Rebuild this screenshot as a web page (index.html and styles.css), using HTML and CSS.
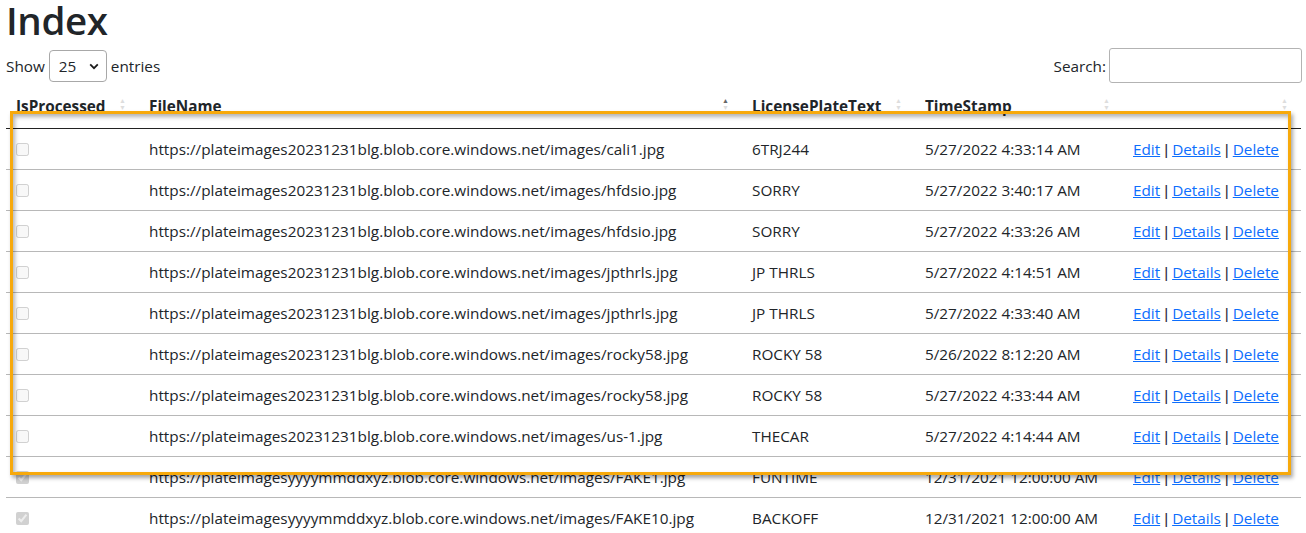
FILE: index.html
```html
<!DOCTYPE html>
<html lang="en">
<head>
<meta charset="utf-8">
<title>Index</title>
<link rel="stylesheet" href="styles.css">
</head>
<body>
<main class="page">
  <h1 class="title">Index</h1>
  <div class="toolbar">
    <label class="length">Show
      <span class="select-wrap">
        <select class="select"><option>25</option></select>
        <svg class="chev" width="10" height="7" viewBox="0 0 10 7"><path d="M1.2 1.4 L5 5.2 L8.8 1.4" fill="none" stroke="#1a1a1a" stroke-width="1.8"/></svg>
      </span>
      entries</label>
    <label class="search">Search:<input class="search-input" type="search"></label>
  </div>
  <div class="table-wrap">
    <table class="grid">
      <colgroup>
        <col class="c1"><col class="c2"><col class="c3"><col class="c4"><col class="c5">
      </colgroup>
      <thead>
        <tr>
          <th class="sortable">IsProcessed</th>
          <th class="sortable asc">FileName</th>
          <th class="sortable">LicensePlateText</th>
          <th class="sortable">TimeStamp</th>
          <th class="sortable"></th>
        </tr>
      </thead>
      <tbody>
        <tr><td><input type="checkbox" disabled></td><td>https://plateimages20231231blg.blob.core.windows.net/images/cali1.jpg</td><td>6TRJ244</td><td>5/27/2022 4:33:14 AM</td><td class="acts"><a href="#">Edit</a> <span class="sep">|</span> <a href="#">Details</a> <span class="sep">|</span> <a href="#">Delete</a></td></tr>
        <tr><td><input type="checkbox" disabled></td><td>https://plateimages20231231blg.blob.core.windows.net/images/hfdsio.jpg</td><td>SORRY</td><td>5/27/2022 3:40:17 AM</td><td class="acts"><a href="#">Edit</a> <span class="sep">|</span> <a href="#">Details</a> <span class="sep">|</span> <a href="#">Delete</a></td></tr>
        <tr><td><input type="checkbox" disabled></td><td>https://plateimages20231231blg.blob.core.windows.net/images/hfdsio.jpg</td><td>SORRY</td><td>5/27/2022 4:33:26 AM</td><td class="acts"><a href="#">Edit</a> <span class="sep">|</span> <a href="#">Details</a> <span class="sep">|</span> <a href="#">Delete</a></td></tr>
        <tr><td><input type="checkbox" disabled></td><td>https://plateimages20231231blg.blob.core.windows.net/images/jpthrls.jpg</td><td>JP THRLS</td><td>5/27/2022 4:14:51 AM</td><td class="acts"><a href="#">Edit</a> <span class="sep">|</span> <a href="#">Details</a> <span class="sep">|</span> <a href="#">Delete</a></td></tr>
        <tr><td><input type="checkbox" disabled></td><td>https://plateimages20231231blg.blob.core.windows.net/images/jpthrls.jpg</td><td>JP THRLS</td><td>5/27/2022 4:33:40 AM</td><td class="acts"><a href="#">Edit</a> <span class="sep">|</span> <a href="#">Details</a> <span class="sep">|</span> <a href="#">Delete</a></td></tr>
        <tr><td><input type="checkbox" disabled></td><td>https://plateimages20231231blg.blob.core.windows.net/images/rocky58.jpg</td><td>ROCKY 58</td><td>5/26/2022 8:12:20 AM</td><td class="acts"><a href="#">Edit</a> <span class="sep">|</span> <a href="#">Details</a> <span class="sep">|</span> <a href="#">Delete</a></td></tr>
        <tr><td><input type="checkbox" disabled></td><td>https://plateimages20231231blg.blob.core.windows.net/images/rocky58.jpg</td><td>ROCKY 58</td><td>5/27/2022 4:33:44 AM</td><td class="acts"><a href="#">Edit</a> <span class="sep">|</span> <a href="#">Details</a> <span class="sep">|</span> <a href="#">Delete</a></td></tr>
        <tr><td><input type="checkbox" disabled></td><td>https://plateimages20231231blg.blob.core.windows.net/images/us-1.jpg</td><td>THECAR</td><td>5/27/2022 4:14:44 AM</td><td class="acts"><a href="#">Edit</a> <span class="sep">|</span> <a href="#">Details</a> <span class="sep">|</span> <a href="#">Delete</a></td></tr>
        <tr><td><input type="checkbox" disabled checked></td><td>https://plateimagesyyyymmddxyz.blob.core.windows.net/images/FAKE1.jpg</td><td>FUNTIME</td><td>12/31/2021 12:00:00 AM</td><td class="acts"><a href="#">Edit</a> <span class="sep">|</span> <a href="#">Details</a> <span class="sep">|</span> <a href="#">Delete</a></td></tr>
        <tr><td><input type="checkbox" disabled checked></td><td>https://plateimagesyyyymmddxyz.blob.core.windows.net/images/FAKE10.jpg</td><td>BACKOFF</td><td>12/31/2021 12:00:00 AM</td><td class="acts"><a href="#">Edit</a> <span class="sep">|</span> <a href="#">Details</a> <span class="sep">|</span> <a href="#">Delete</a></td></tr>
      </tbody>
    </table>
    <div class="highlight"></div>
  </div>
</main>
</body>
</html>
```
FILE: styles.css
```css
* { box-sizing: border-box; }
html, body { margin: 0; background: #fff; }
body {
  font-family: "Open Sans", "Noto Sans", sans-serif;
  font-size: 15.3px;
  line-height: 24px;
  color: #212529;
  overflow: hidden;
}
.page {
  padding: 0 4px 0 6px;
  position: relative;
}
.title {
  margin: 0;
  font-size: 38.5px;
  font-weight: 600;
  line-height: 36px;
  height: 47px;
  padding-top: 2px;
  letter-spacing: -0.4px;
}
.toolbar {
  display: flex;
  justify-content: space-between;
  align-items: center;
  height: 37px;
}
.length {
  display: flex;
  align-items: center;
  gap: 4px;
}
.select-wrap {
  position: relative;
  display: inline-block;
}
.select {
  appearance: none;
  -webkit-appearance: none;
  width: 58px;
  height: 32px;
  padding: 0 0 0 9px;
  font: inherit;
  color: #212529;
  background: #fff;
  border: 1px solid #a8a8a8;
  border-radius: 4px;
}
.chev {
  position: absolute;
  right: 8px;
  top: 13px;
  pointer-events: none;
}
.search {
  display: flex;
  align-items: center;
  gap: 3px;
}
.search-input {
  width: 193px;
  height: 35px;
  border: 1px solid #b3b3b3;
  border-radius: 3px;
  font: inherit;
}
.table-wrap {
  position: relative;
}
.grid {
  width: 1295px;
  table-layout: fixed;
  border-collapse: collapse;
}
.c1 { width: 133px; }
.c2 { width: 603px; }
.c3 { width: 173px; }
.c4 { width: 208px; }
.c5 { width: 178px; }
.grid th {
  position: relative;
  text-align: left;
  font-weight: 700;
  padding: 10px 18px 10px 10px;
  border-bottom: 1px solid #222;
  white-space: nowrap;
  overflow: hidden;
}
.sortable::before,
.sortable::after {
  position: absolute;
  right: 13px;
  font-size: 7px;
  line-height: 7px;
  color: #000;
  opacity: 0.13;
}
.sortable::before { content: "\25B2"; top: 13px; }
.sortable::after { content: "\25BC"; top: 20px; }
.asc::before { opacity: 0.6; }
.grid td {
  height: 41px;
  padding: 8px 10px;
  border-top: 1px solid #b8b8b8;
  white-space: nowrap;
  overflow: hidden;
  vertical-align: middle;
}
.grid tbody tr:first-child td { border-top: 0; height: 40px; }
.grid input[type="checkbox"] {
  margin: 0;
  width: 13px;
  height: 13px;
  vertical-align: -1px;
}
.acts a {
  color: #0d6efd;
  text-decoration: underline;
}
.sep {
  font-family: "Liberation Sans", sans-serif;
  line-height: 1;
  color: #2b1f3a;
}
.highlight {
  position: absolute;
  left: 4px;
  top: 27px;
  width: 1281px;
  height: 364px;
  border: 3px solid #f7a90b;
  box-shadow: 2px 3px 4px rgba(0, 0, 0, 0.35), inset 2px 3px 4px rgba(0, 0, 0, 0.3);
  pointer-events: none;
}
```
